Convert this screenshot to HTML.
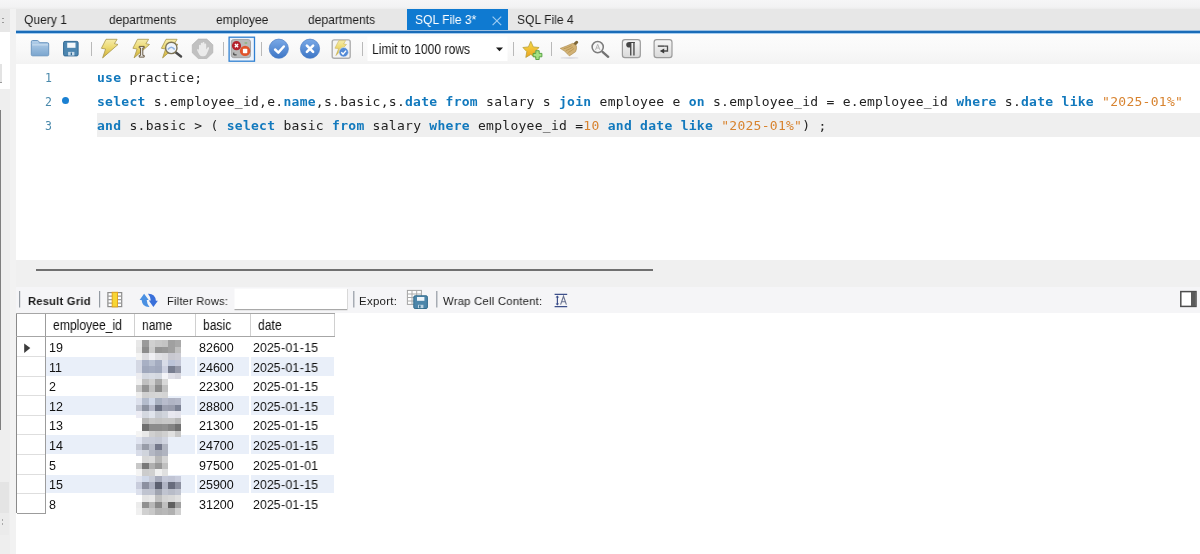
<!DOCTYPE html>
<html><head><meta charset="utf-8">
<style>
*{margin:0;padding:0;box-sizing:border-box}
html,body{width:1200px;height:554px;overflow:hidden;background:#fff}
body{position:relative;font-family:"Liberation Sans",sans-serif;color:#1a1a1a}
.a{position:absolute}
.t{position:absolute;white-space:nowrap;transform-origin:0 50%;line-height:1;will-change:transform}
/* top strip */
#top{left:0;top:0;width:1200px;height:9.500px;background:linear-gradient(#f6f6f7,#f2f2f3 70%,#e9e9e9)}
#tabbar{left:16px;top:9px;width:1184px;height:22px;background:#e7e7e7}
#blue{left:16px;top:30px;width:1184px;height:4px;background:linear-gradient(#9cbfe0 0,#9cbfe0 25%,#1a6cb8 25%,#1a6cb8 75%,#a6cdf0 75%)}
#acttab{left:407px;top:9px;width:101px;height:22px;background:#0f7ad1}
.tab{top:13px;font-size:13.500px;color:#1e1e1e;transform:scaleX(.895)}
#toolbar{left:16px;top:34px;width:1184px;height:29.500px;background:linear-gradient(#fcfcfc,#f9f9f9 50%,#f3f3f3)}
.sep{position:absolute;width:1px;top:42px;height:14px;background:#b8b8b8}
/* editor */
#editor{left:16px;top:63.500px;width:1184px;height:197px;background:#fff}
#curline{left:96.500px;top:113.3px;width:1104px;height:23.3px;background:#efefef}
.ln{font-family:"DejaVu Sans Mono","Liberation Mono",monospace;font-size:11.500px;color:#4a89ab;left:45.200px}
.code{font-family:"DejaVu Sans Mono","Liberation Mono",monospace;font-size:13px;letter-spacing:.278px;left:97.300px;color:#222;white-space:pre}
.k{color:#1279bd;font-weight:bold}
.s{color:#d8832f}
/* left strip */
#lside{left:0;top:9px;width:10px;height:545px;background:#fff}
#lsplit{left:9.500px;top:9px;width:6.500px;height:545px;background:#f2f2f2}
/* gap */
#gap{left:16px;top:260px;width:1184px;height:27px;background:#f0f0f0}
#hscroll{left:36px;top:268.500px;width:616.500px;height:2.200px;background:#707070}
#rtool{left:16px;top:287px;width:1184px;height:26px;background:#f5f5f7}
.rt{top:295.800px;font-size:11.500px;color:#1c1c1c;letter-spacing:.25px}
.hd{top:318.5px;font-size:13.8px;color:#111;transform:scaleX(.88)}
/* grid */
#grid{left:17px;top:313px;width:318px;height:200px}
.cell{font-size:12.500px;transform:scaleX(.99);color:#111}
.hy{margin:0 .45px}
</style></head><body>
<div class="a" id="top"></div>
<div class="a" id="lside"></div>
<div class="a" style="left:0;top:9px;width:9.500px;height:23px;background:#e7e7e7"></div>
<div class="a" style="left:2px;top:17.500px;width:1.600px;height:1.600px;background:#9a9a9a"></div>
<div class="a" style="left:2px;top:21.500px;width:1.600px;height:1.600px;background:#9a9a9a"></div>
<div class="a" style="left:0;top:64px;width:1.800px;height:19px;background:#e3e3e3;border-bottom:1px solid #9a9a9a"></div>
<div class="a" style="left:0;top:89px;width:9.500px;height:465px;background:#eeeeee"></div>
<div class="a" style="left:0;top:110px;width:1.400px;height:320px;background:#7e7e7e"></div>
<div class="a" style="left:0;top:481.500px;width:9px;height:31.500px;background:#e4e4e4"></div>
<div class="a" style="left:0;top:513px;width:9px;height:22px;background:#ebebeb"></div>
<div class="a" style="left:1.500px;top:519px;width:1.500px;height:1.500px;background:#aaa"></div>
<div class="a" style="left:1.500px;top:523px;width:1.500px;height:1.500px;background:#aaa"></div>
<div class="a" id="lsplit"></div>
<div class="a" id="tabbar"></div>
<div class="a" id="acttab"></div>
<div class="a" id="blue"></div>
<div class="t tab" style="left:24px">Query 1</div>
<div class="t tab" style="left:109px">departments</div>
<div class="t tab" style="left:216px">employee</div>
<div class="t tab" style="left:308px">departments</div>
<div class="t tab" style="left:415px;color:#fff">SQL File 3*</div>
<div class="t tab" style="left:517px">SQL File 4</div>
<div class="a" id="toolbar"></div>
<svg class="a" style="left:0;top:32px" width="1200" height="30" viewBox="0 32 1200 30">
<defs>
<linearGradient id="gfold" x1="0" y1="0" x2="0" y2="1"><stop offset="0" stop-color="#b5d0ea"/><stop offset="1" stop-color="#7ba6cf"/></linearGradient>
<linearGradient id="gbolt" x1="0" y1="0" x2="0" y2="1"><stop offset="0" stop-color="#f6ecab"/><stop offset=".45" stop-color="#ecd971"/><stop offset="1" stop-color="#cfae36"/></linearGradient>
<linearGradient id="gblue" x1="0" y1="0" x2="0" y2="1"><stop offset="0" stop-color="#7aa9e6"/><stop offset="1" stop-color="#3d76c6"/></linearGradient>
<linearGradient id="gbtn" x1="0" y1="0" x2="0" y2="1"><stop offset="0" stop-color="#f6f6f6"/><stop offset="1" stop-color="#d9d9d9"/></linearGradient>
<linearGradient id="gstar" x1="0" y1="0" x2="0" y2="1"><stop offset="0" stop-color="#f6dc4a"/><stop offset="1" stop-color="#eba21e"/></linearGradient>
</defs>
<!-- folder -->
<path d="M31.300 43.400V41.800q0-1.300 1.300-1.300h4.700q1 0 1.400.8l.7 1.400h8q1.300 0 1.300 1.300v10.500q0 1.300-1.300 1.300H32.600q-1.300 0-1.300-1.300Z" fill="url(#gfold)" stroke="#6c97c0" stroke-width="1"/>
<path d="M32.200 44.900H48" stroke="#cfe1f2" stroke-width=".9"/>
<!-- save -->
<rect x="63.600" y="41.400" width="14.500" height="14.500" rx="1.300" fill="#4d86b0" stroke="#336a94" stroke-width="1"/>
<rect x="67.200" y="42.700" width="8.300" height="5.100" fill="#f4f8fb"/>
<rect x="68.100" y="51.900" width="6.300" height="3.600" fill="#c9dbea"/>
<rect x="70.700" y="52.500" width="1.300" height="2.600" fill="#336a94"/>
<!-- seps -->
<g fill="#b9b9b9"><rect x="91" y="42" width="1" height="14"/><rect x="223" y="42" width="1" height="14"/><rect x="261" y="42" width="1" height="14"/><rect x="362" y="42" width="1" height="14"/><rect x="513" y="42" width="1" height="14"/><rect x="551" y="42" width="1" height="14"/></g>
<!-- bolts -->
<path d="M106 39.3H117.1L114.4 43.7L118 44.5L102.6 57.9L105.6 49L101.4 48.3Z" fill="url(#gbolt)" stroke="#a8974c" stroke-width=".8"/>
<path d="M106 39.3H117.1L114.4 43.7L118 44.5L102.6 57.9L105.6 49L101.4 48.3Z" transform="translate(31.5,0)" fill="url(#gbolt)" stroke="#a8974c" stroke-width=".8"/>
<path d="M106 39.3H117.1L114.4 43.7L118 44.5L102.6 57.9L105.6 49L101.4 48.3Z" transform="translate(60,0)" fill="url(#gbolt)" stroke="#a8974c" stroke-width=".8"/>
<!-- I-beam on bolt 2 -->
<path d="M139.2 46.4h5v1.5h-1.400v7.500h1.400v1.700h-5v-1.700h1.400v-7.500h-1.400Z" fill="#f1f1f1" stroke="#5a4a32" stroke-width=".9"/>
<!-- magnifier on bolt 3 -->
<path d="M175.600 52.300L181 56.400" stroke="#4a4a4a" stroke-width="2.500" stroke-linecap="round"/>
<circle cx="171.300" cy="47.900" r="5.700" fill="#eef3fa" stroke="#7d7456" stroke-width="1.400"/>
<path d="M167.900 49.600q3.400-4.600 6.800 0" stroke="#8fb2de" stroke-width="1.600" fill="none"/>
<!-- stop -->
<path d="M198.300 39.100h8.500l6 5.700v8l-6 5.700h-8.500l-6-5.700v-8Z" fill="#c1c1c1" stroke="#b3b3b3" stroke-width=".7"/>
<path d="M199 50.800v-5.600q0-.9.900-.9t.9.900v-1.700q0-.9.900-.9t.9.900v-.600q0-.9.900-.9t.9.900v1.200q0-.9.900-.9t.9.900v4.500l1.200-1.700q.6-.8 1.300-.3t.2 1.400l-2.300 4.600q-.9 1.800-2.900 1.800h-1.800q-1.800 0-2.600-1.500l-2-3.400q-.5-.9.200-1.300t1.300.4Z" fill="#ebebeb" transform="translate(0,-6.300) scale(1,1.150)"/>
<!-- toggle -->
<rect x="229.100" y="37.200" width="25.400" height="24" fill="#eef3fa" stroke="#2f80d2" stroke-width="1.300"/>
<rect x="231.300" y="39.500" width="19.200" height="18.200" rx="2.400" fill="#b9b9b9" stroke="#9a9a9a" stroke-width=".8"/>
<circle cx="236.500" cy="45.700" r="4.600" fill="#b4232c"/>
<path d="M234.900 44.100l3.200 3.200m0-3.200l-3.200 3.200" stroke="#fff" stroke-width="1.400"/>
<circle cx="245.100" cy="50.900" r="5.200" fill="#e0532b"/>
<rect x="242.900" y="48.700" width="4.400" height="4.600" rx=".8" fill="#fff"/>
<path d="M233.800 52.600v2.300h2.800" stroke="#333" stroke-width="1" fill="none"/>
<rect x="244.600" y="42.400" width="2.600" height="1.200" fill="#82b56c"/>
<!-- check / cancel -->
<circle cx="278.800" cy="48.700" r="9.600" fill="url(#gblue)" stroke="#4a7cc4" stroke-width=".7"/>
<path d="M275.100 49.500l3.200 3.100l5.500-6.100" stroke="#fff" stroke-width="2.500" fill="none" stroke-linecap="round" stroke-linejoin="round"/>
<circle cx="310" cy="48.700" r="9.600" fill="url(#gblue)" stroke="#4a7cc4" stroke-width=".7"/>
<path d="M306.900 45.600l6.200 6.200m0-6.200l-6.200 6.200" stroke="#fff" stroke-width="2.600" stroke-linecap="round"/>
<!-- doc bolt -->
<rect x="332.200" y="39.900" width="18" height="18.300" rx="2" fill="#f4f4f4" stroke="#adadad" stroke-width="1.400"/>
<path d="M338.800 40.600h6.800l-2 3.400l2.900.5l-10.600 11.100l2.700-7l-3.700-.4Z" fill="url(#gbolt)" stroke="#c4ad50" stroke-width=".5"/>
<circle cx="343.700" cy="52.200" r="4.700" fill="#5189d6" stroke="#dfe9f6" stroke-width=".6"/>
<path d="M341.300 52.300l1.700 1.800l3.100-3.500" stroke="#fff" stroke-width="1.400" fill="none"/>
<!-- combo -->
<rect x="367.5" y="36.5" width="140" height="24.5" fill="#fff"/>
<path d="M496 47.6h7l-3.5 3.6Z" fill="#1a1a1a"/>
<!-- star -->
<path d="M530.800 41.400l2.500 5.500l5.800.6l-4.300 4.100l1.300 5.900l-5.300-3l-5 2.900l1-5.800l-3.900-4.100l5.500-.6Z" fill="url(#gstar)" stroke="#b9a034" stroke-width=".8" stroke-linejoin="round"/>
<path d="M535.800 50.700h3.400v2.700h2.700v3.400h-2.700v2.700h-3.400v-2.700h-2.700v-3.400h2.700Z" fill="#a4e184" stroke="#4d9c3c" stroke-width=".9" stroke-linejoin="round"/>
<!-- broom -->
<ellipse cx="569.500" cy="57.900" rx="9" ry="1" fill="#dcdce2"/>
<path d="M576.700 42.300l-3.300 3.300" stroke="#7c6638" stroke-width="3" stroke-linecap="round"/>
<path d="M572.800 43.300l3.600 2.400q.6 3.400-.8 6l-6.200 4.200q-.9-1.200-2.100-1.900q-.6-1.500-2-2.100q-1-1.300-2.400-1.800q-1.300-1-2.700-1.700q6.400-2.300 12.600-5.100Z" fill="#d2b276" stroke="#ab8a4c" stroke-width=".6"/>
<path d="M563.600 48.800q4-1 8-3.200m-5.700 5q3.600-1.300 7-3.600m-4.700 5.500q3.200-1.700 6-4.100" stroke="#b08d48" stroke-width=".7" fill="none"/>
<!-- magnifier -->
<path d="M602.500 51.800l5.700 5" stroke="#737373" stroke-width="2.400" stroke-linecap="round"/>
<circle cx="597.700" cy="47.100" r="5.600" fill="#f6f6f6" stroke="#7c7c7c" stroke-width="1.500"/>
<path d="M595.500 49.900l2.200-5.600l2.200 5.600m-3.600-1.900h2.800" stroke="#b4b4b4" stroke-width="1" fill="none"/>
<!-- pilcrow -->
<rect x="622.400" y="39.600" width="17.900" height="18.100" rx="2.600" fill="url(#gbtn)" stroke="#9b9b9b" stroke-width="1.200"/>
<path d="M634.900 42h-5.700q-3 0-3 2.800t3 2.800h.9v7.800h1.300v-12.300h1.900v12.300h1.300v-12.300h.300Z" fill="#454545"/>
<!-- wrap -->
<rect x="654.100" y="39.600" width="17.900" height="18.100" rx="2.600" fill="url(#gbtn)" stroke="#9b9b9b" stroke-width="1.200"/>
<path d="M657.800 46.100h6.400" stroke="#3a3a3a" stroke-width="1.300" fill="none"/>
<path d="M664.200 46.100h3.300v4.900h-3.600" stroke="#4d4d4d" stroke-width="1.300" fill="none"/>
<path d="M664.200 48.500v5l-4.400-2.500Z" fill="#3a3a3a"/>
</svg>
<div class="t" style="left:372px;top:42.400px;font-size:14px;color:#161616;transform:scaleX(.863)">Limit to 1000 rows</div>
<svg class="a" style="left:490px;top:13.200px" width="14" height="16" viewBox="0 0 14 16"><path d="M2.600 3.600l8.600 8.600m0-8.600l-8.600 8.600" stroke="#9ccbf2" stroke-width="1.200"/></svg>
<div class="a" id="editor"></div>
<div class="a" id="curline"></div>
<div class="t ln" style="top:73px">1</div>
<div class="t ln" style="top:97px">2</div>
<div class="t ln" style="top:121px">3</div>
<div class="a" style="left:62px;top:97px;width:7.200px;height:7.200px;border-radius:50%;background:#1a80d2"></div>
<div class="t code" style="top:71px"><span class="k">use</span> practice;</div>
<div class="t code" style="top:95px"><span class="k">select</span> s.employee_id,e.<span class="k">name</span>,s.basic,s.<span class="k">date</span> <span class="k">from</span> salary s <span class="k">join</span> employee e <span class="k">on</span> s.employee_id = e.employee_id <span class="k">where</span> s.<span class="k">date</span> <span class="k">like</span> <span class="s">"2025-01%"</span></div>
<div class="t code" style="top:119px"><span class="k">and</span> s.basic &gt; ( <span class="k">select</span> basic <span class="k">from</span> salary <span class="k">where</span> employee_id =<span class="s">10</span> <span class="k">and</span> <span class="k">date</span> <span class="k">like</span> <span class="s">"2025-01%"</span>) ;</div>
<div class="a" id="gap"></div>
<div class="a" id="hscroll"></div>
<div class="a" id="rtool"></div>
<svg class="a" style="left:0;top:287px" width="1200" height="26" viewBox="0 287 1200 26">
<g fill="#949ba3"><rect x="19" y="291" width="1.200" height="16.500"/><rect x="99" y="291" width="1.200" height="16.500"/><rect x="353.200" y="291" width="1.200" height="16.500"/><rect x="436.200" y="291" width="1.200" height="16.500"/></g>
<!-- grid icon -->
<rect x="107.900" y="292.600" width="13.800" height="14" fill="#fff" stroke="#8c8c8c" stroke-width="1.200"/>
<path d="M107.900 296.100h13.800m-13.800 3.500h13.800m-13.800 3.500h13.800" stroke="#9c9c9c" stroke-width="1.300"/>
<rect x="112.200" y="292.300" width="5.300" height="14.600" fill="#f7d634" stroke="#e2a31e" stroke-width="1"/>
<!-- refresh -->
<path d="M139.600 300L144.100 293.700L148.700 300.100L146.700 300.100Q146.900 304 149.500 307Q142.300 307.300 141.600 300Z" fill="#4a90e2"/>
<path d="M157.900 300.700L153.400 307L148.800 300.600L150.800 300.600Q150.600 296.700 148 293.700Q155.200 293.400 155.900 300.700Z" fill="#3a70da"/>
<!-- filter input -->
<rect x="234.500" y="288.600" width="113" height="20.400" fill="#fff"/>
<rect x="234.500" y="309" width="113" height="1.200" fill="#a9a9a9"/>
<rect x="347" y="289" width="1" height="21" fill="#d9d9d9"/>
<!-- export icon -->
<rect x="407.400" y="290.400" width="14" height="14" fill="#fff" stroke="#a3a3a3" stroke-width="1"/>
<path d="M407.400 294h14m-14 3.500h14m-14 3.500h14M412 290.400v14m4.700-14v14" stroke="#ababab" stroke-width="1"/>
<rect x="413.800" y="295.800" width="13.600" height="12.700" rx="1.300" fill="#4c86aa" stroke="#336c8c" stroke-width="1"/>
<rect x="417" y="297" width="7.400" height="3.800" fill="#eef5fa"/>
<rect x="418" y="304.800" width="5.400" height="3.300" fill="#bcd3e2"/>
<rect x="419" y="305.400" width="1.600" height="2.300" fill="#336c8c"/>
<!-- wrap icon -->
<path d="M554.600 294.300h12.600M554.600 306.600h12.600" stroke="#3d4f8a" stroke-width="1.200"/>
<path d="M557.400 296v9" stroke="#3d4f8a" stroke-width="1.200"/>
<path d="M555.600 297.600l1.800-2l1.800 2ZM555.600 303.400l1.800 2l1.800-2Z" fill="#3d4f8a"/>
<path d="M560.600 304.600l2.900-8.400l2.900 8.400m-4.800-2.800h3.800" stroke="#6a7390" stroke-width="1.100" fill="none"/>
<!-- panel toggle icon -->
<rect x="1180.800" y="291.600" width="15.200" height="14.800" fill="#fff" stroke="#4d4d4d" stroke-width="1.500"/>
<rect x="1191" y="292" width="4.600" height="14" fill="#5a5a5a"/>
</svg>
<div class="t rt" style="left:28px;font-weight:bold;transform:scaleX(.97)">Result Grid</div>
<div class="t rt" style="left:167px;transform:scaleX(.96)">Filter Rows:</div>
<div class="t rt" style="left:358.700px">Export:</div>
<div class="t rt" style="left:442.500px;transform:scaleX(.98)">Wrap Cell Content:</div>
<div class="a" style="left:46px;top:356.9px;width:288px;height:18.7px;background:#e9eff9"></div>
<div class="a" style="left:46px;top:396.1px;width:288px;height:18.7px;background:#e9eff9"></div>
<div class="a" style="left:46px;top:435.3px;width:288px;height:18.7px;background:#e9eff9"></div>
<div class="a" style="left:46px;top:474.5px;width:288px;height:18.7px;background:#e9eff9"></div>
<div class="a" style="left:17px;top:356.0px;width:28px;height:1px;background:#dedede"></div>
<div class="a" style="left:17px;top:375.6px;width:28px;height:1px;background:#dedede"></div>
<div class="a" style="left:17px;top:395.2px;width:28px;height:1px;background:#dedede"></div>
<div class="a" style="left:17px;top:414.8px;width:28px;height:1px;background:#dedede"></div>
<div class="a" style="left:17px;top:434.4px;width:28px;height:1px;background:#dedede"></div>
<div class="a" style="left:17px;top:454.0px;width:28px;height:1px;background:#dedede"></div>
<div class="a" style="left:17px;top:473.6px;width:28px;height:1px;background:#dedede"></div>
<div class="a" style="left:17px;top:493.2px;width:28px;height:1px;background:#dedede"></div>
<div class="a" style="left:17px;top:512.8px;width:28px;height:1px;background:#dedede"></div>
<div class="a" style="left:17px;top:512.6px;width:29px;height:1px;background:#9c9c9c"></div>
<div class="a" style="left:16.3px;top:313px;width:1px;height:200px;background:#8a8a8a"></div>
<div class="a" style="left:45px;top:313px;width:1px;height:200px;background:#9c9c9c"></div>
<div class="a" style="left:16.3px;top:313.1px;width:318.7px;height:1px;background:#a6a6a6"></div>
<div class="a" style="left:16.3px;top:336.1px;width:318.7px;height:1px;background:#a6a6a6"></div>
<div class="a" style="left:134.2px;top:314px;width:1px;height:22px;background:#d0d0d0"></div>
<div class="a" style="left:195.4px;top:314px;width:1px;height:22px;background:#d0d0d0"></div>
<div class="a" style="left:249.6px;top:314px;width:1px;height:22px;background:#d0d0d0"></div>
<div class="a" style="left:334px;top:314px;width:1px;height:22px;background:#d0d0d0"></div>
<div class="t hd" style="left:52.900px">employee_id</div>
<div class="t hd" style="left:141.800px">name</div>
<div class="t hd" style="left:202.900px">basic</div>
<div class="t hd" style="left:257.900px">date</div>
<div class="t cell" style="left:48.7px;top:342.0px">19</div>
<div class="t cell" style="left:199px;top:342.0px">82600</div>
<div class="t cell" style="left:252.8px;top:342.0px">2025<span class="hy">-</span>01<span class="hy">-</span>15</div>
<div class="t cell" style="left:48.7px;top:361.6px">11</div>
<div class="t cell" style="left:199px;top:361.6px">24600</div>
<div class="t cell" style="left:252.8px;top:361.6px">2025<span class="hy">-</span>01<span class="hy">-</span>15</div>
<div class="t cell" style="left:48.7px;top:381.2px">2</div>
<div class="t cell" style="left:199px;top:381.2px">22300</div>
<div class="t cell" style="left:252.8px;top:381.2px">2025<span class="hy">-</span>01<span class="hy">-</span>15</div>
<div class="t cell" style="left:48.7px;top:400.8px">12</div>
<div class="t cell" style="left:199px;top:400.8px">28800</div>
<div class="t cell" style="left:252.8px;top:400.8px">2025<span class="hy">-</span>01<span class="hy">-</span>15</div>
<div class="t cell" style="left:48.7px;top:420.4px">13</div>
<div class="t cell" style="left:199px;top:420.4px">21300</div>
<div class="t cell" style="left:252.8px;top:420.4px">2025<span class="hy">-</span>01<span class="hy">-</span>15</div>
<div class="t cell" style="left:48.7px;top:440.0px">14</div>
<div class="t cell" style="left:199px;top:440.0px">24700</div>
<div class="t cell" style="left:252.8px;top:440.0px">2025<span class="hy">-</span>01<span class="hy">-</span>15</div>
<div class="t cell" style="left:48.7px;top:459.6px">5</div>
<div class="t cell" style="left:199px;top:459.6px">97500</div>
<div class="t cell" style="left:252.8px;top:459.6px">2025<span class="hy">-</span>01<span class="hy">-</span>01</div>
<div class="t cell" style="left:48.7px;top:479.2px">15</div>
<div class="t cell" style="left:199px;top:479.2px">25900</div>
<div class="t cell" style="left:252.8px;top:479.2px">2025<span class="hy">-</span>01<span class="hy">-</span>15</div>
<div class="t cell" style="left:48.7px;top:498.8px">8</div>
<div class="t cell" style="left:199px;top:498.8px">31200</div>
<div class="t cell" style="left:252.8px;top:498.8px">2025<span class="hy">-</span>01<span class="hy">-</span>15</div>
<div class="a" style="left:195.2px;top:337px;width:1.600px;height:176px;background:#fff"></div><div class="a" style="left:249.4px;top:337px;width:1.600px;height:176px;background:#fff"></div>
<svg class="a" style="left:130px;top:336px;filter:blur(.35px)" width="60" height="184" viewBox="130 336 60 184" shape-rendering="crispEdges">
<rect x="135.95" y="340.30" width="6.48" height="6.50" fill="#e8e8e8"/>
<rect x="142.38" y="340.30" width="6.48" height="6.50" fill="#9a9a9a"/>
<rect x="148.81" y="340.30" width="6.48" height="6.50" fill="#d0d0d0"/>
<rect x="155.24" y="340.30" width="6.48" height="6.50" fill="#c8c8c8"/>
<rect x="161.67" y="340.30" width="6.48" height="6.50" fill="#c4c4c4"/>
<rect x="168.10" y="340.30" width="6.48" height="6.50" fill="#a0a0a0"/>
<rect x="174.53" y="340.30" width="6.48" height="6.50" fill="#a8a8a8"/>
<rect x="135.95" y="346.75" width="6.48" height="6.50" fill="#e4e4e4"/>
<rect x="142.38" y="346.75" width="6.48" height="6.50" fill="#8c8c8c"/>
<rect x="148.81" y="346.75" width="6.48" height="6.50" fill="#cccccc"/>
<rect x="155.24" y="346.75" width="6.48" height="6.50" fill="#949494"/>
<rect x="161.67" y="346.75" width="6.48" height="6.50" fill="#989898"/>
<rect x="168.10" y="346.75" width="6.48" height="6.50" fill="#a0a0a0"/>
<rect x="174.53" y="346.75" width="6.48" height="6.50" fill="#c0c0c0"/>
<rect x="135.95" y="353.20" width="6.48" height="6.50" fill="#f4f4f4"/>
<rect x="142.38" y="353.20" width="6.48" height="6.50" fill="#dcdce0"/>
<rect x="148.81" y="353.20" width="6.48" height="6.50" fill="#f0f0f4"/>
<rect x="155.24" y="353.20" width="6.48" height="6.50" fill="#e0e0e4"/>
<rect x="161.67" y="353.20" width="6.48" height="6.50" fill="#dcdce0"/>
<rect x="168.10" y="353.20" width="6.48" height="6.50" fill="#c8c8d0"/>
<rect x="174.53" y="353.20" width="6.48" height="6.50" fill="#ccccd4"/>
<rect x="135.95" y="359.65" width="6.48" height="6.50" fill="#d4d8e4"/>
<rect x="142.38" y="359.65" width="6.48" height="6.50" fill="#a8b0c4"/>
<rect x="148.81" y="359.65" width="6.48" height="6.50" fill="#b8c0d0"/>
<rect x="155.24" y="359.65" width="6.48" height="6.50" fill="#a4acc0"/>
<rect x="161.67" y="359.65" width="6.48" height="6.50" fill="#d8dce8"/>
<rect x="168.10" y="359.65" width="6.48" height="6.50" fill="#bcc4d8"/>
<rect x="174.53" y="359.65" width="6.48" height="6.50" fill="#c4c8d8"/>
<rect x="135.95" y="366.10" width="6.48" height="6.50" fill="#d4d8e4"/>
<rect x="142.38" y="366.10" width="6.48" height="6.50" fill="#a0a8bc"/>
<rect x="148.81" y="366.10" width="6.48" height="6.50" fill="#a4acc0"/>
<rect x="155.24" y="366.10" width="6.48" height="6.50" fill="#a0a8bc"/>
<rect x="161.67" y="366.10" width="6.48" height="6.50" fill="#ccd0e0"/>
<rect x="168.10" y="366.10" width="6.48" height="6.50" fill="#787e90"/>
<rect x="174.53" y="366.10" width="6.48" height="6.50" fill="#9498a8"/>
<rect x="135.95" y="372.55" width="6.48" height="6.50" fill="#ececf0"/>
<rect x="142.38" y="372.55" width="6.48" height="6.50" fill="#d4d8e0"/>
<rect x="148.81" y="372.55" width="6.48" height="6.50" fill="#d8dce4"/>
<rect x="155.24" y="372.55" width="6.48" height="6.50" fill="#d4d8e0"/>
<rect x="161.67" y="372.55" width="6.48" height="6.50" fill="#f4f4f8"/>
<rect x="168.10" y="372.55" width="6.48" height="6.50" fill="#e0e0e8"/>
<rect x="174.53" y="372.55" width="6.48" height="6.50" fill="#d8d8e0"/>
<rect x="135.95" y="379.00" width="6.48" height="6.50" fill="#f0f0f0"/>
<rect x="142.38" y="379.00" width="6.48" height="6.50" fill="#c0c0c0"/>
<rect x="148.81" y="379.00" width="6.48" height="6.50" fill="#d0d0d0"/>
<rect x="155.24" y="379.00" width="6.48" height="6.50" fill="#a8a8a8"/>
<rect x="161.67" y="379.00" width="6.48" height="6.50" fill="#d8d8d8"/>
<rect x="135.95" y="385.45" width="6.48" height="6.50" fill="#c8c8c8"/>
<rect x="142.38" y="385.45" width="6.48" height="6.50" fill="#949494"/>
<rect x="148.81" y="385.45" width="6.48" height="6.50" fill="#c0c0c0"/>
<rect x="155.24" y="385.45" width="6.48" height="6.50" fill="#8c8c8c"/>
<rect x="161.67" y="385.45" width="6.48" height="6.50" fill="#c0c0c0"/>
<rect x="135.95" y="391.90" width="6.48" height="6.50" fill="#ececec"/>
<rect x="142.38" y="391.90" width="6.48" height="6.50" fill="#d0d0d0"/>
<rect x="148.81" y="391.90" width="6.48" height="6.50" fill="#d4d4d4"/>
<rect x="155.24" y="391.90" width="6.48" height="6.50" fill="#d6d6d6"/>
<rect x="161.67" y="391.90" width="6.48" height="6.50" fill="#d4d4d4"/>
<rect x="135.95" y="398.35" width="6.48" height="6.50" fill="#dce0ec"/>
<rect x="142.38" y="398.35" width="6.48" height="6.50" fill="#b4bccc"/>
<rect x="148.81" y="398.35" width="6.48" height="6.50" fill="#d0d8e8"/>
<rect x="155.24" y="398.35" width="6.48" height="6.50" fill="#a8b0c0"/>
<rect x="161.67" y="398.35" width="6.48" height="6.50" fill="#b8bccc"/>
<rect x="168.10" y="398.35" width="6.48" height="6.50" fill="#b0b4c4"/>
<rect x="174.53" y="398.35" width="6.48" height="6.50" fill="#b4b8c8"/>
<rect x="135.95" y="404.80" width="6.48" height="6.50" fill="#c0c4d0"/>
<rect x="142.38" y="404.80" width="6.48" height="6.50" fill="#8c92a0"/>
<rect x="148.81" y="404.80" width="6.48" height="6.50" fill="#b4b8c8"/>
<rect x="155.24" y="404.80" width="6.48" height="6.50" fill="#6c7284"/>
<rect x="161.67" y="404.80" width="6.48" height="6.50" fill="#9ca0b0"/>
<rect x="168.10" y="404.80" width="6.48" height="6.50" fill="#989cac"/>
<rect x="174.53" y="404.80" width="6.48" height="6.50" fill="#7c8294"/>
<rect x="135.95" y="411.25" width="6.48" height="6.50" fill="#ececf4"/>
<rect x="142.38" y="411.25" width="6.48" height="6.50" fill="#d4d8e0"/>
<rect x="148.81" y="411.25" width="6.48" height="6.50" fill="#e0e4ec"/>
<rect x="155.24" y="411.25" width="6.48" height="6.50" fill="#c8ccd4"/>
<rect x="161.67" y="411.25" width="6.48" height="6.50" fill="#d0d4dc"/>
<rect x="168.10" y="411.25" width="6.48" height="6.50" fill="#e8e8f0"/>
<rect x="174.53" y="411.25" width="6.48" height="6.50" fill="#e4e4ec"/>
<rect x="142.38" y="417.70" width="6.48" height="6.50" fill="#b8b8b8"/>
<rect x="148.81" y="417.70" width="6.48" height="6.50" fill="#c8c8c8"/>
<rect x="155.24" y="417.70" width="6.48" height="6.50" fill="#c4c4c4"/>
<rect x="161.67" y="417.70" width="6.48" height="6.50" fill="#c8c8c8"/>
<rect x="168.10" y="417.70" width="6.48" height="6.50" fill="#c8c8c8"/>
<rect x="174.53" y="417.70" width="6.48" height="6.50" fill="#b8b8b8"/>
<rect x="142.38" y="424.15" width="6.48" height="6.50" fill="#707070"/>
<rect x="148.81" y="424.15" width="6.48" height="6.50" fill="#8c8c8c"/>
<rect x="155.24" y="424.15" width="6.48" height="6.50" fill="#8c8c8c"/>
<rect x="161.67" y="424.15" width="6.48" height="6.50" fill="#909090"/>
<rect x="168.10" y="424.15" width="6.48" height="6.50" fill="#848484"/>
<rect x="174.53" y="424.15" width="6.48" height="6.50" fill="#707070"/>
<rect x="135.95" y="430.60" width="6.48" height="6.50" fill="#f4f4f4"/>
<rect x="142.38" y="430.60" width="6.48" height="6.50" fill="#e8e8e8"/>
<rect x="148.81" y="430.60" width="6.48" height="6.50" fill="#d0d0d0"/>
<rect x="155.24" y="430.60" width="6.48" height="6.50" fill="#c8c8c8"/>
<rect x="161.67" y="430.60" width="6.48" height="6.50" fill="#d0d0d0"/>
<rect x="168.10" y="430.60" width="6.48" height="6.50" fill="#e0e0e0"/>
<rect x="174.53" y="430.60" width="6.48" height="6.50" fill="#c8c8c8"/>
<rect x="135.95" y="437.05" width="6.48" height="6.50" fill="#e0e4f0"/>
<rect x="142.38" y="437.05" width="6.48" height="6.50" fill="#c8ccd8"/>
<rect x="148.81" y="437.05" width="6.48" height="6.50" fill="#c8ccd8"/>
<rect x="155.24" y="437.05" width="6.48" height="6.50" fill="#c4c8d4"/>
<rect x="161.67" y="437.05" width="6.48" height="6.50" fill="#d0d4e0"/>
<rect x="135.95" y="443.50" width="6.48" height="6.50" fill="#c4c8d4"/>
<rect x="142.38" y="443.50" width="6.48" height="6.50" fill="#989ca8"/>
<rect x="148.81" y="443.50" width="6.48" height="6.50" fill="#b8bcc8"/>
<rect x="155.24" y="443.50" width="6.48" height="6.50" fill="#74788a"/>
<rect x="161.67" y="443.50" width="6.48" height="6.50" fill="#b0b4c0"/>
<rect x="135.95" y="449.95" width="6.48" height="6.50" fill="#d8dce8"/>
<rect x="142.38" y="449.95" width="6.48" height="6.50" fill="#d0d4dc"/>
<rect x="148.81" y="449.95" width="6.48" height="6.50" fill="#b4b8c4"/>
<rect x="155.24" y="449.95" width="6.48" height="6.50" fill="#a8acb8"/>
<rect x="161.67" y="449.95" width="6.48" height="6.50" fill="#b0b4c0"/>
<rect x="142.38" y="456.40" width="6.48" height="6.50" fill="#d8d8d8"/>
<rect x="148.81" y="456.40" width="6.48" height="6.50" fill="#dcdcdc"/>
<rect x="155.24" y="456.40" width="6.48" height="6.50" fill="#b8b8b8"/>
<rect x="161.67" y="456.40" width="6.48" height="6.50" fill="#d4d4d4"/>
<rect x="135.95" y="462.85" width="6.48" height="6.50" fill="#c8c8c8"/>
<rect x="142.38" y="462.85" width="6.48" height="6.50" fill="#787878"/>
<rect x="148.81" y="462.85" width="6.48" height="6.50" fill="#b0b0b0"/>
<rect x="155.24" y="462.85" width="6.48" height="6.50" fill="#989898"/>
<rect x="161.67" y="462.85" width="6.48" height="6.50" fill="#c0c0c0"/>
<rect x="135.95" y="469.30" width="6.48" height="6.50" fill="#f4f4f4"/>
<rect x="142.38" y="469.30" width="6.48" height="6.50" fill="#cccccc"/>
<rect x="148.81" y="469.30" width="6.48" height="6.50" fill="#d0d0d0"/>
<rect x="155.24" y="469.30" width="6.48" height="6.50" fill="#f0f0f0"/>
<rect x="161.67" y="469.30" width="6.48" height="6.50" fill="#e0e0e0"/>
<rect x="135.95" y="475.75" width="6.48" height="6.50" fill="#e0e4f0"/>
<rect x="142.38" y="475.75" width="6.48" height="6.50" fill="#d0d8e8"/>
<rect x="148.81" y="475.75" width="6.48" height="6.50" fill="#c8ccd8"/>
<rect x="155.24" y="475.75" width="6.48" height="6.50" fill="#a8acbc"/>
<rect x="161.67" y="475.75" width="6.48" height="6.50" fill="#c4c8d8"/>
<rect x="168.10" y="475.75" width="6.48" height="6.50" fill="#c0c4d4"/>
<rect x="174.53" y="475.75" width="6.48" height="6.50" fill="#c8ccdc"/>
<rect x="135.95" y="482.20" width="6.48" height="6.50" fill="#c8ccdc"/>
<rect x="142.38" y="482.20" width="6.48" height="6.50" fill="#8c90a0"/>
<rect x="148.81" y="482.20" width="6.48" height="6.50" fill="#acb0c0"/>
<rect x="155.24" y="482.20" width="6.48" height="6.50" fill="#5c6070"/>
<rect x="161.67" y="482.20" width="6.48" height="6.50" fill="#b0b4c4"/>
<rect x="168.10" y="482.20" width="6.48" height="6.50" fill="#686c7c"/>
<rect x="174.53" y="482.20" width="6.48" height="6.50" fill="#8c90a0"/>
<rect x="135.95" y="488.65" width="6.48" height="6.50" fill="#dce0ec"/>
<rect x="142.38" y="488.65" width="6.48" height="6.50" fill="#c0c4d0"/>
<rect x="148.81" y="488.65" width="6.48" height="6.50" fill="#c0c4d0"/>
<rect x="155.24" y="488.65" width="6.48" height="6.50" fill="#a0a4b0"/>
<rect x="161.67" y="488.65" width="6.48" height="6.50" fill="#c0c4d0"/>
<rect x="168.10" y="488.65" width="6.48" height="6.50" fill="#b8bcc8"/>
<rect x="174.53" y="488.65" width="6.48" height="6.50" fill="#c0c4d0"/>
<rect x="142.38" y="495.10" width="6.48" height="6.50" fill="#e4e4e4"/>
<rect x="148.81" y="495.10" width="6.48" height="6.50" fill="#e8e8e8"/>
<rect x="155.24" y="495.10" width="6.48" height="6.50" fill="#c0c0c0"/>
<rect x="161.67" y="495.10" width="6.48" height="6.50" fill="#d4d4d4"/>
<rect x="168.10" y="495.10" width="6.48" height="6.50" fill="#d8d8d8"/>
<rect x="174.53" y="495.10" width="6.48" height="6.50" fill="#e0e0e0"/>
<rect x="135.95" y="501.55" width="6.48" height="6.50" fill="#ececec"/>
<rect x="142.38" y="501.55" width="6.48" height="6.50" fill="#909090"/>
<rect x="148.81" y="501.55" width="6.48" height="6.50" fill="#b8b8b8"/>
<rect x="155.24" y="501.55" width="6.48" height="6.50" fill="#888888"/>
<rect x="161.67" y="501.55" width="6.48" height="6.50" fill="#c0c0c0"/>
<rect x="168.10" y="501.55" width="6.48" height="6.50" fill="#606060"/>
<rect x="174.53" y="501.55" width="6.48" height="6.50" fill="#a0a0a0"/>
<rect x="135.95" y="508.00" width="6.48" height="6.50" fill="#f0f0f0"/>
<rect x="142.38" y="508.00" width="6.48" height="6.50" fill="#d0d0d0"/>
<rect x="148.81" y="508.00" width="6.48" height="6.50" fill="#c8c8c8"/>
<rect x="155.24" y="508.00" width="6.48" height="6.50" fill="#b4b4b4"/>
<rect x="161.67" y="508.00" width="6.48" height="6.50" fill="#b8b8b8"/>
<rect x="168.10" y="508.00" width="6.48" height="6.50" fill="#b0b0b0"/>
<rect x="174.53" y="508.00" width="6.48" height="6.50" fill="#d0d0d0"/>
</svg>
<svg class="a" style="left:23px;top:342px" width="9" height="12" viewBox="0 0 9 12"><path d="M1.2 1.400L7.300 6.100L1.200 10.900Z" fill="#3c3c3c"/></svg>
</body></html>
